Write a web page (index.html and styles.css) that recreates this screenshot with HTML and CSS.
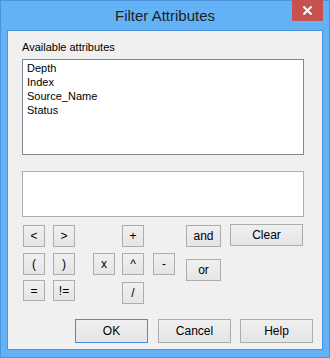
FILE: index.html
```html
<!DOCTYPE html>
<html lang="en">
<head>
    <meta charset="UTF-8">
    <meta name="viewport" content="width=device-width, initial-scale=1.0">
    <link rel="stylesheet" href="styles.css">
    <title>Filter Attributes</title>
</head>
<body>
    <div class="window">
        <div class="titlebar">
            <span class="title">Filter Attributes</span>
            <button class="close">
                <svg width="9" height="9" viewBox="0 0 9 9">
                    <path d="M0.5 0.5 L8.5 8.5 M8.5 0.5 L0.5 8.5" stroke="#fff" stroke-width="2"/>
                </svg>
            </button>
        </div>
        <div class="client">
            <div class="content">
                <div class="label">Available attributes</div>
                <div class="listbox">
                    <div class="item">Depth</div>
                    <div class="item">Index</div>
                    <div class="item">Source_Name</div>
                    <div class="item">Status</div>
                </div>
                <div class="expression"></div>
                <div class="keypad">
                    <div class="col c1">
                        <button class="key">&lt;</button>
                        <button class="key">(</button>
                        <button class="key">=</button>
                    </div>
                    <div class="col c2">
                        <button class="key">&gt;</button>
                        <button class="key">)</button>
                        <button class="key">!=</button>
                    </div>
                    <div class="col c3">
                        <button class="key">x</button>
                    </div>
                    <div class="col c4">
                        <button class="key">+</button>
                        <button class="key">^</button>
                        <button class="key">/</button>
                    </div>
                    <div class="col c5">
                        <button class="key">-</button>
                    </div>
                    <div class="col c6">
                        <button class="key wide">and</button>
                        <button class="key wide">or</button>
                    </div>
                    <div class="col c7">
                        <button class="key clear">Clear</button>
                    </div>
                </div>
            </div>
            <div class="footer">
                <button class="btn default">OK</button>
                <button class="btn">Cancel</button>
                <button class="btn">Help</button>
            </div>
        </div>
    </div>
</body>
</html>
```

FILE: styles.css
```css
  body{
    margin: 0;
    font-family: "Liberation Sans", Arial, sans-serif;
    font-size: 11px;
    color: #000;
  }
  .window{
    position: relative;
    box-sizing: border-box;
    width: 330px;
    height: 358px;
    border: 1px solid #4d93dc;
    background-color: #64b2f6;
    padding: 0 6px 7px 6px;
    display: flex;
    flex-direction: column;
  }
  .titlebar{
    height: 29px;
    line-height: 29px;
    text-align: center;
  }
  .title{
    font-size: 15px;
    color: #222;
  }
  .close{
    position: absolute;
    top: -1px;
    right: 6px;
    width: 31px;
    height: 21px;
    border: none;
    padding: 0;
    background-color: #c75050;
    display: flex;
    align-items: center;
    justify-content: center;
  }
  .client{
    flex: 1;
    border: 1px solid #4d93dc;
    background-color: #f0f0f0;
    display: flex;
    flex-direction: column;
  }
  .content{
    padding: 10px 18px 0 14px;
  }
  .label{
    line-height: 13px;
  }
  .listbox{
    margin-top: 5px;
    height: 96px;
    box-sizing: border-box;
    border: 1px solid #828790;
    background-color: #fff;
    padding: 1px 4px;
  }
  .item{
    line-height: 14px;
  }
  .expression{
    margin-top: 16px;
    height: 46px;
    box-sizing: border-box;
    border: 1px solid #abadb3;
    background-color: #fff;
  }
  .keypad{
    display: flex;
    margin-top: 8px;
    margin-left: 1px;
    align-items: flex-start;
  }
  .col{
    display: flex;
    flex-direction: column;
  }
  button{
    font-family: "Liberation Sans", Arial, sans-serif;
    color: #000;
  }
  .key{
    width: 22px;
    height: 22px;
    padding: 0;
    border: 1px solid #adadad;
    background: linear-gradient(#f0f0f0, #e5e5e5);
    font-size: 12px;
  }
  .c1 .key:nth-child(2), .c2 .key:nth-child(2){
    margin-top: 6px;
  }
  .c1 .key:nth-child(3), .c2 .key:nth-child(3){
    margin-top: 5px;
    height: 21px;
  }
  .c2{
    margin-left: 8px;
  }
  .c3{
    margin-left: 18px;
    margin-top: 28px;
  }
  .c4{
    margin-left: 7px;
  }
  .c4 .key:nth-child(2){
    margin-top: 6px;
  }
  .c4 .key:nth-child(3){
    margin-top: 7px;
  }
  .c5{
    margin-left: 9px;
    margin-top: 28px;
  }
  .c6{
    margin-left: 11px;
  }
  .wide{
    width: 35px;
  }
  .wide + .wide{
    margin-top: 12px;
  }
  .c7{
    margin-left: 9px;
    margin-top: -1px;
  }
  .clear{
    width: 73px;
  }
  .footer{
    margin-top: auto;
    padding: 0 9px 6px 0;
    display: flex;
    justify-content: flex-end;
    gap: 9px;
  }
  .btn{
    width: 73px;
    height: 24px;
    padding: 0;
    border: 1px solid #adadad;
    background: linear-gradient(#f0f0f0, #e5e5e5);
    font-size: 12px;
  }
  .default{
    border-color: #3c8ee6;
    margin-right: 1px;
  }
```
